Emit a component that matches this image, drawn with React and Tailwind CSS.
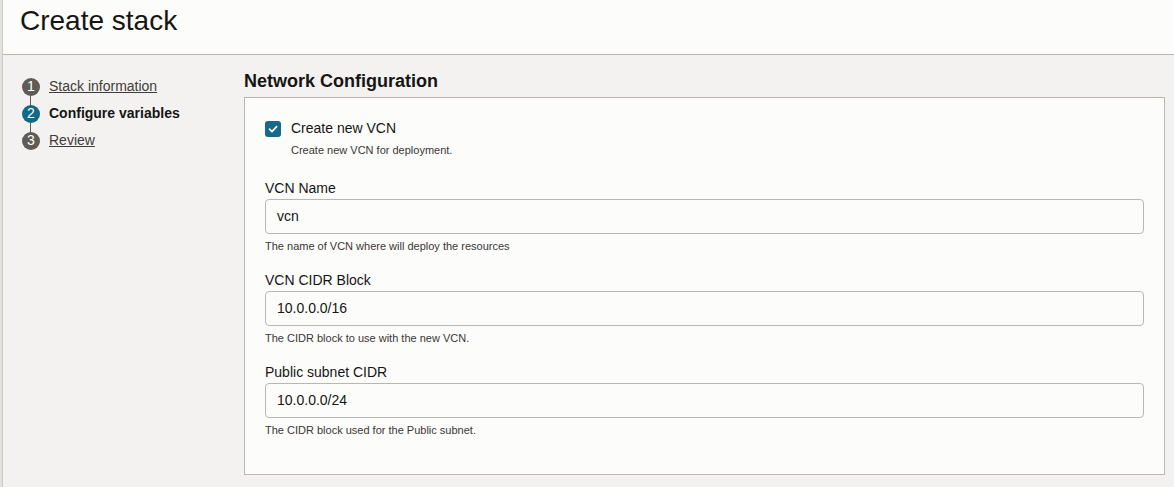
const steps = [
  { n: 1, label: 'Stack information', active: false },
  { n: 2, label: 'Configure variables', active: true },
  { n: 3, label: 'Review', active: false },
]

const fields = [
  { label: 'VCN Name', value: 'vcn', help: 'The name of VCN where will deploy the resources' },
  { label: 'VCN CIDR Block', value: '10.0.0.0/16', help: 'The CIDR block to use with the new VCN.' },
  { label: 'Public subnet CIDR', value: '10.0.0.0/24', help: 'The CIDR block used for the Public subnet.' },
]

export default function App() {
  return (
    <div className="w-[1174px] h-[487px] flex bg-[#f3f2f1] text-[#161513] overflow-hidden" style={{ fontFamily: '"Liberation Sans", Arial, sans-serif' }}>
      <div className="w-[3px] bg-[#e4e2dd] border-r border-[#cfcac4]" />
      <div className="flex-1 flex flex-col">
        <header className="h-[55px] bg-[#fcfcfb] border-b border-[#bcb6b0] pl-[17px] pt-[7px]">
          <h1 className="text-[28px] leading-[28px]">Create stack</h1>
        </header>
        <div className="flex flex-1">
          <nav className="w-[241px] pl-[19px] pt-[18px]">
            {steps.map((s, i) => (
              <div key={s.n} className="flex items-center h-[27px] relative">
                {i < steps.length - 1 && (
                  <div className="absolute left-[8px] top-[18px] w-px h-[18px] bg-[#5f5b57]" />
                )}
                <div className={`relative w-[18px] h-[18px] rounded-full flex items-center justify-center text-white text-[14px] ${s.active ? 'bg-[#0e6a86]' : 'bg-[#605b57]'}`}>
                  {s.n}
                </div>
                <span className={`ml-[9px] text-[14px] ${s.active ? 'font-bold' : 'underline text-[#3f3c39]'}`}>{s.label}</span>
              </div>
            ))}
          </nav>
          <main className="flex-1 pr-[9px] pt-[17px]">
            <h2 className="text-[18px] font-bold leading-none mb-[7px]">Network Configuration</h2>
            <section className="bg-[#fcfcfb] border border-[#bcb6b0] pl-[20px] pr-[20px] pt-[20px] h-[378px]">
              <label className="flex items-center gap-[10px]">
                <span className="w-[16px] h-[16px] rounded-[3px] bg-[#16698a] flex items-center justify-center">
                  <svg width="12" height="12" viewBox="0 0 12 12" fill="none" stroke="white" strokeWidth="1.6" strokeLinecap="round" strokeLinejoin="round">
                    <path d="M2.5 6.2 L5 8.6 L9.6 3.6" />
                  </svg>
                </span>
                <span className="text-[14px]">Create new VCN</span>
              </label>
              <p className="ml-[26px] mt-[3px] text-[11px] text-[#3a3734]">Create new VCN for deployment.</p>
              {fields.map((f, i) => (
                <div key={f.label} className={i === 0 ? 'mt-[22px]' : 'mt-[21px]'}>
                  <div className="text-[14px] leading-none mb-[4px]">{f.label}</div>
                  <div className="h-[35px] border border-[#bcb6b0] rounded-[4px] bg-[#fcfcfb] flex items-center px-[11px] text-[14px]">{f.value}</div>
                  <p className="mt-[7px] text-[11px] leading-none text-[#3a3734]">{f.help}</p>
                </div>
              ))}
            </section>
          </main>
        </div>
      </div>
    </div>
  )
}
